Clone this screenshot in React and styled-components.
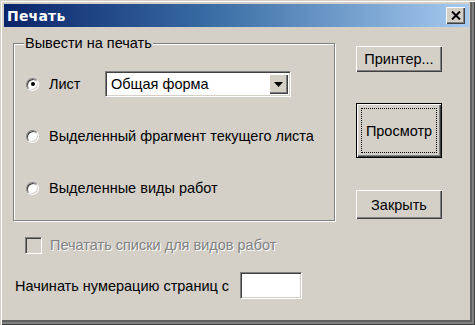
import React from 'react';
import styled, { createGlobalStyle } from 'styled-components';

const face = '#d4d0c8';
const shadow = '#808080';
const darkShadow = '#404040';

const GlobalStyle = createGlobalStyle`
  html, body {
    margin: 0;
    padding: 0;
    background: ${face};
  }
  body {
    font-family: "Liberation Sans", Arial, sans-serif;
    font-size: 14.5px;
    color: #000;
  }
`;

const Window = styled.div`
  width: 475px;
  height: 325px;
  box-sizing: border-box;
  background: ${face};
  padding: 4px 6px 6px 4px;
  box-shadow:
    inset 1px 1px 0 ${face},
    inset 2px 2px 0 #fff,
    inset -1px -1px 0 ${darkShadow},
    inset -3px -3px 0 ${shadow},
    inset -5px -5px 0 #606060;
  display: flex;
  flex-direction: column;
`;

const TitleBar = styled.div`
  height: 23px;
  flex-shrink: 0;
  display: flex;
  align-items: center;
  justify-content: space-between;
  padding: 0 4px 0 3px;
  background: linear-gradient(to right, #0a246a 0%, #3a6ea5 45%, #a6caf0 100%);
`;

const Title = styled.span`
  color: #fff;
  font-family: "DejaVu Sans", Verdana, sans-serif;
  font-weight: bold;
  font-size: 14px;
  letter-spacing: 0.2px;
`;

const CloseButton = styled.div`
  width: 19px;
  height: 17px;
  background: ${face};
  box-shadow:
    inset 1px 1px 0 #fff,
    inset -1px -1px 0 ${darkShadow},
    inset -2px -2px 0 ${shadow};
  display: flex;
  align-items: center;
  justify-content: center;
`;

const Body = styled.div`
  padding: 16px 0 0 9px;
  display: flex;
  flex-direction: column;
`;

const TopRow = styled.div`
  display: flex;
  align-items: flex-start;
`;

const GroupBox = styled.div`
  position: relative;
  width: 322px;
  height: 178px;
  box-sizing: border-box;
  border: 1px solid ${shadow};
  box-shadow: inset 1px 1px 0 #fff, 1px 1px 0 #fff;
  padding: 27px 0 0 12px;
  display: flex;
  flex-direction: column;
  gap: 26px;
`;

const Legend = styled.span`
  position: absolute;
  top: -9px;
  left: 10px;
  padding: 0 1px;
  background: ${face};
  line-height: 16px;
`;

const OptionRow = styled.label`
  height: 26px;
  display: flex;
  align-items: center;
`;

const Radio = styled.span`
  width: 13px;
  height: 13px;
  border-radius: 50%;
  box-sizing: border-box;
  background: #fff;
  border: 1px solid;
  border-color: ${shadow} #fff #fff ${shadow};
  box-shadow: inset 1px 1px 0 ${darkShadow}, inset -1px -1px 0 ${face};
  display: flex;
  align-items: center;
  justify-content: center;
  flex-shrink: 0;
  &::after {
    content: '';
    width: 4px;
    height: 4px;
    border-radius: 50%;
    background: ${(p) => (p.checked ? '#000' : 'transparent')};
  }
`;

const OptionText = styled.span`
  margin-left: 10px;
  width: ${(p) => (p.width ? `${p.width}px` : 'auto')};
`;

const Combo = styled.div`
  width: 186px;
  height: 26px;
  box-sizing: border-box;
  background: #fff;
  border: 1px solid;
  border-color: ${shadow} #fff #fff ${shadow};
  box-shadow: inset 1px 1px 0 ${darkShadow}, inset -1px -1px 0 ${face};
  display: flex;
  align-items: center;
  padding: 0 2px 0 5px;
`;

const ComboText = styled.span`
  flex: 1;
`;

const ComboButton = styled.span`
  width: 19px;
  height: 20px;
  background: ${face};
  box-shadow:
    inset 1px 1px 0 #fff,
    inset -1px -1px 0 ${darkShadow},
    inset -2px -2px 0 ${shadow};
  display: flex;
  align-items: center;
  justify-content: center;
`;

const ButtonColumn = styled.div`
  margin-left: 21px;
  display: flex;
  flex-direction: column;
`;

const Button = styled.div`
  width: 86px;
  height: ${(p) => p.h}px;
  margin-top: ${(p) => p.mt}px;
  box-sizing: border-box;
  background: ${face};
  display: flex;
  align-items: center;
  justify-content: center;
  box-shadow:
    inset 1px 1px 0 #fff,
    inset -1px -1px 0 ${darkShadow},
    inset -2px -2px 0 ${shadow};
  border: ${(p) => (p.isDefault ? '1px solid #000' : 'none')};
`;

const FocusRect = styled.span`
  align-self: stretch;
  flex: 1;
  margin: 4px;
  border: 1px dotted #000;
  display: flex;
  align-items: center;
  justify-content: center;
`;

const CheckRow = styled.label`
  margin: 15px 0 0 12px;
  height: 18px;
  display: flex;
  align-items: center;
  color: ${shadow};
  text-shadow: 1px 1px 0 #fff;
`;

const CheckBox = styled.span`
  width: 17px;
  height: 17px;
  box-sizing: border-box;
  border: 1px solid;
  border-color: ${shadow} #fff #fff ${shadow};
  box-shadow: inset 1px 1px 0 ${darkShadow}, inset -1px -1px 0 ${face};
  background: ${face};
  flex-shrink: 0;
`;

const CheckText = styled.span`
  margin-left: 8px;
`;

const StartRow = styled.div`
  margin: 18px 0 0 2px;
  display: flex;
  align-items: center;
`;

const StartLabel = styled.span`
  width: 225px;
`;

const TextInput = styled.div`
  width: 62px;
  height: 27px;
  box-sizing: border-box;
  background: #fff;
  border: 1px solid;
  border-color: ${shadow} #fff #fff ${shadow};
  box-shadow: inset 1px 1px 0 ${darkShadow}, inset -1px -1px 0 ${face};
`;

const CloseIcon = () => (
  <svg width="10" height="9" viewBox="0 0 10 9">
    <path d="M1 0.5 L9 8.5 M9 0.5 L1 8.5" stroke="#000" strokeWidth="2" />
  </svg>
);

const ArrowIcon = () => (
  <svg width="9" height="5" viewBox="0 0 9 5">
    <path d="M0 0 H9 L4.5 5 Z" fill="#000" />
  </svg>
);

const App = () => (
  <>
    <GlobalStyle />
    <Window>
      <TitleBar>
        <Title>Печать</Title>
        <CloseButton>
          <CloseIcon />
        </CloseButton>
      </TitleBar>
      <Body>
        <TopRow>
          <GroupBox>
            <Legend>Вывести на печать</Legend>
            <OptionRow>
              <Radio checked />
              <OptionText width={56}>Лист</OptionText>
              <Combo>
                <ComboText>Общая форма</ComboText>
                <ComboButton>
                  <ArrowIcon />
                </ComboButton>
              </Combo>
            </OptionRow>
            <OptionRow>
              <Radio />
              <OptionText>Выделенный фрагмент текущего листа</OptionText>
            </OptionRow>
            <OptionRow>
              <Radio />
              <OptionText>Выделенные виды работ</OptionText>
            </OptionRow>
          </GroupBox>
          <ButtonColumn>
            <Button h={26} mt={3}>Принтер...</Button>
            <Button h={55} mt={31} isDefault>
              <FocusRect>Просмотр</FocusRect>
            </Button>
            <Button h={29} mt={32}>Закрыть</Button>
          </ButtonColumn>
        </TopRow>
        <CheckRow>
          <CheckBox />
          <CheckText>Печатать списки для видов работ</CheckText>
        </CheckRow>
        <StartRow>
          <StartLabel>Начинать нумерацию страниц с</StartLabel>
          <TextInput />
        </StartRow>
      </Body>
    </Window>
  </>
);

export default App;
